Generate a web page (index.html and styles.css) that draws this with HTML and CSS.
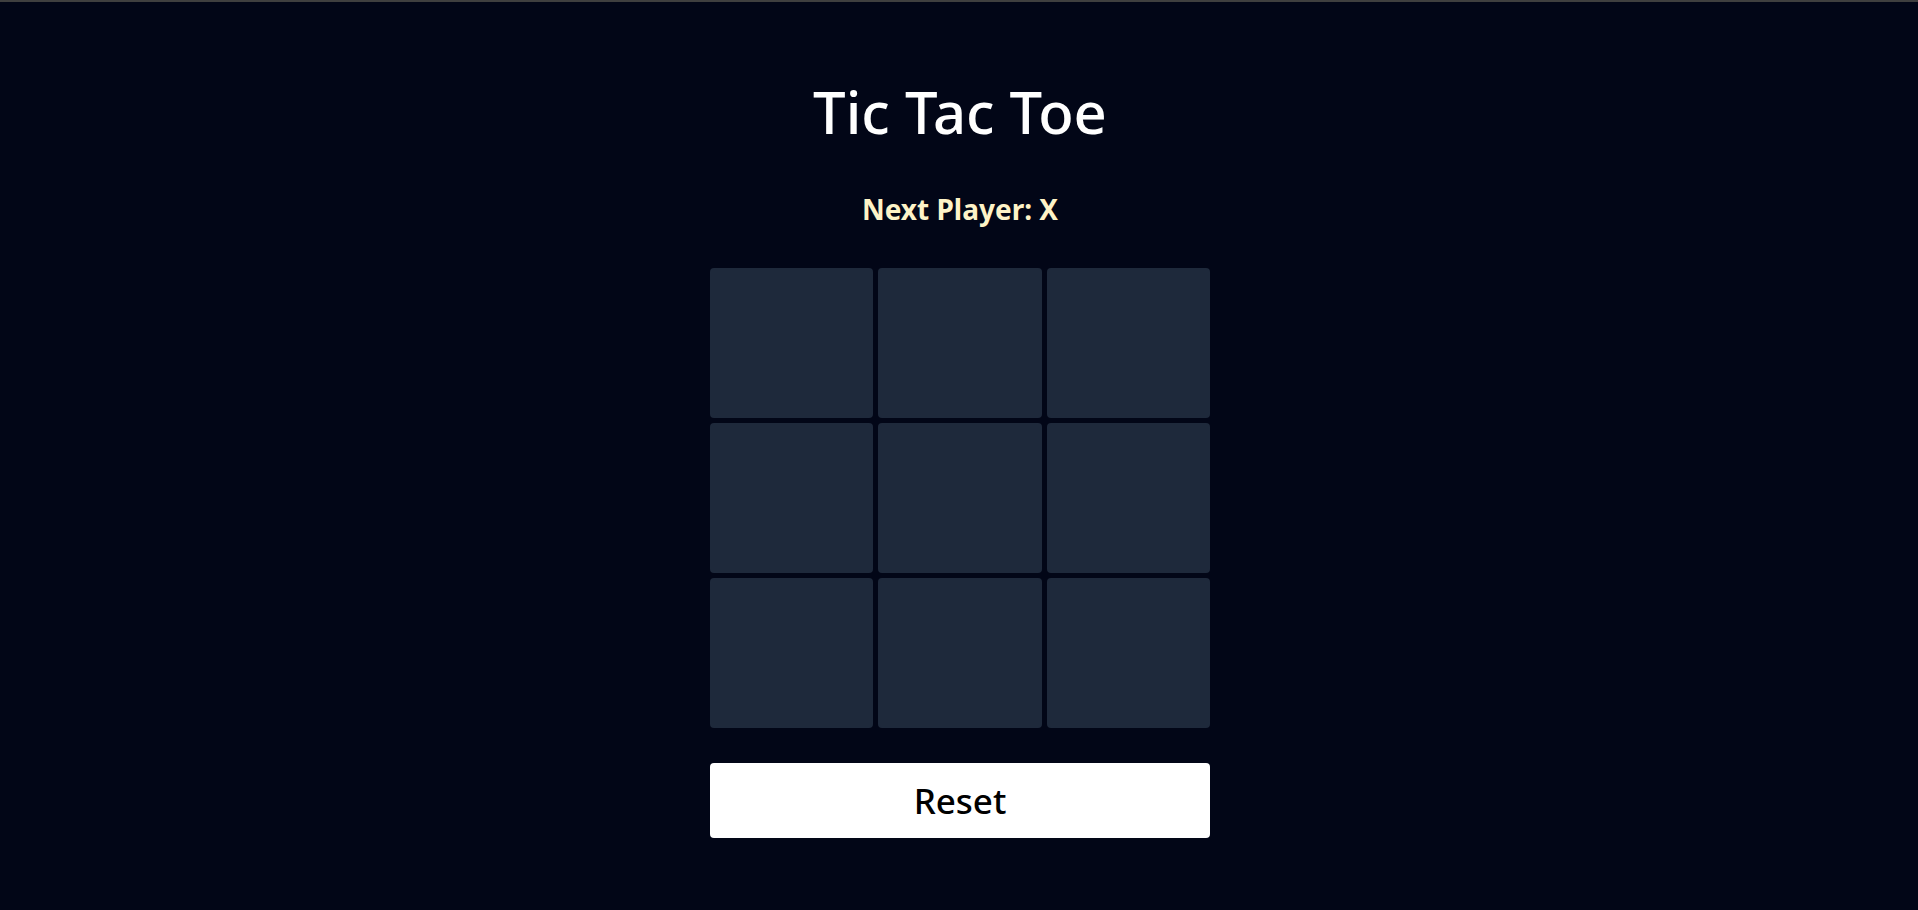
FILE: index.html
```html
<!DOCTYPE html>
<html lang="en">
<head>
<meta charset="utf-8">
<title>Tic Tac Toe</title>
<link rel="stylesheet" href="styles.css">
</head>
<body>
<main class="game">
  <h1 class="title">Tic Tac Toe</h1>
  <p class="status">Next Player: X</p>
  <div class="board">
    <button class="cell"></button>
    <button class="cell"></button>
    <button class="cell"></button>
    <button class="cell"></button>
    <button class="cell"></button>
    <button class="cell"></button>
    <button class="cell"></button>
    <button class="cell"></button>
    <button class="cell"></button>
  </div>
  <button class="reset">Reset</button>
</main>
</body>
</html>
```
FILE: styles.css
```css
html, body {
  margin: 0;
  padding: 0;
  height: 100%;
}
body {
  background: #020617;
  border-top: 2px solid #3f3f3f;
  box-sizing: border-box;
  font-family: "Noto Sans", "Open Sans", sans-serif;
  color: #ffffff;
}
.game {
  display: flex;
  flex-direction: column;
  align-items: center;
  padding-left: 2px;
}
.title {
  margin: 80px 0 0;
  font-size: 58px;
  font-weight: 500;
  line-height: 60px;
}
.status {
  margin: 51px 0 0;
  font-size: 28px;
  font-weight: 700;
  line-height: 32px;
  color: #fef3c7;
}
.board {
  margin-top: 43px;
  width: 500px;
  display: grid;
  grid-template-columns: repeat(3, 1fr);
  grid-auto-rows: 150px;
  gap: 5px;
}
.cell {
  background: #1e293b;
  border: none;
  border-radius: 4px;
  padding: 0;
}
.reset {
  margin-top: 35px;
  width: 500px;
  height: 75px;
  background: #ffffff;
  border: none;
  border-radius: 4px;
  font-family: "Noto Sans", "Open Sans", sans-serif;
  font-size: 35px;
  font-weight: 500;
  color: #000000;
}
```
